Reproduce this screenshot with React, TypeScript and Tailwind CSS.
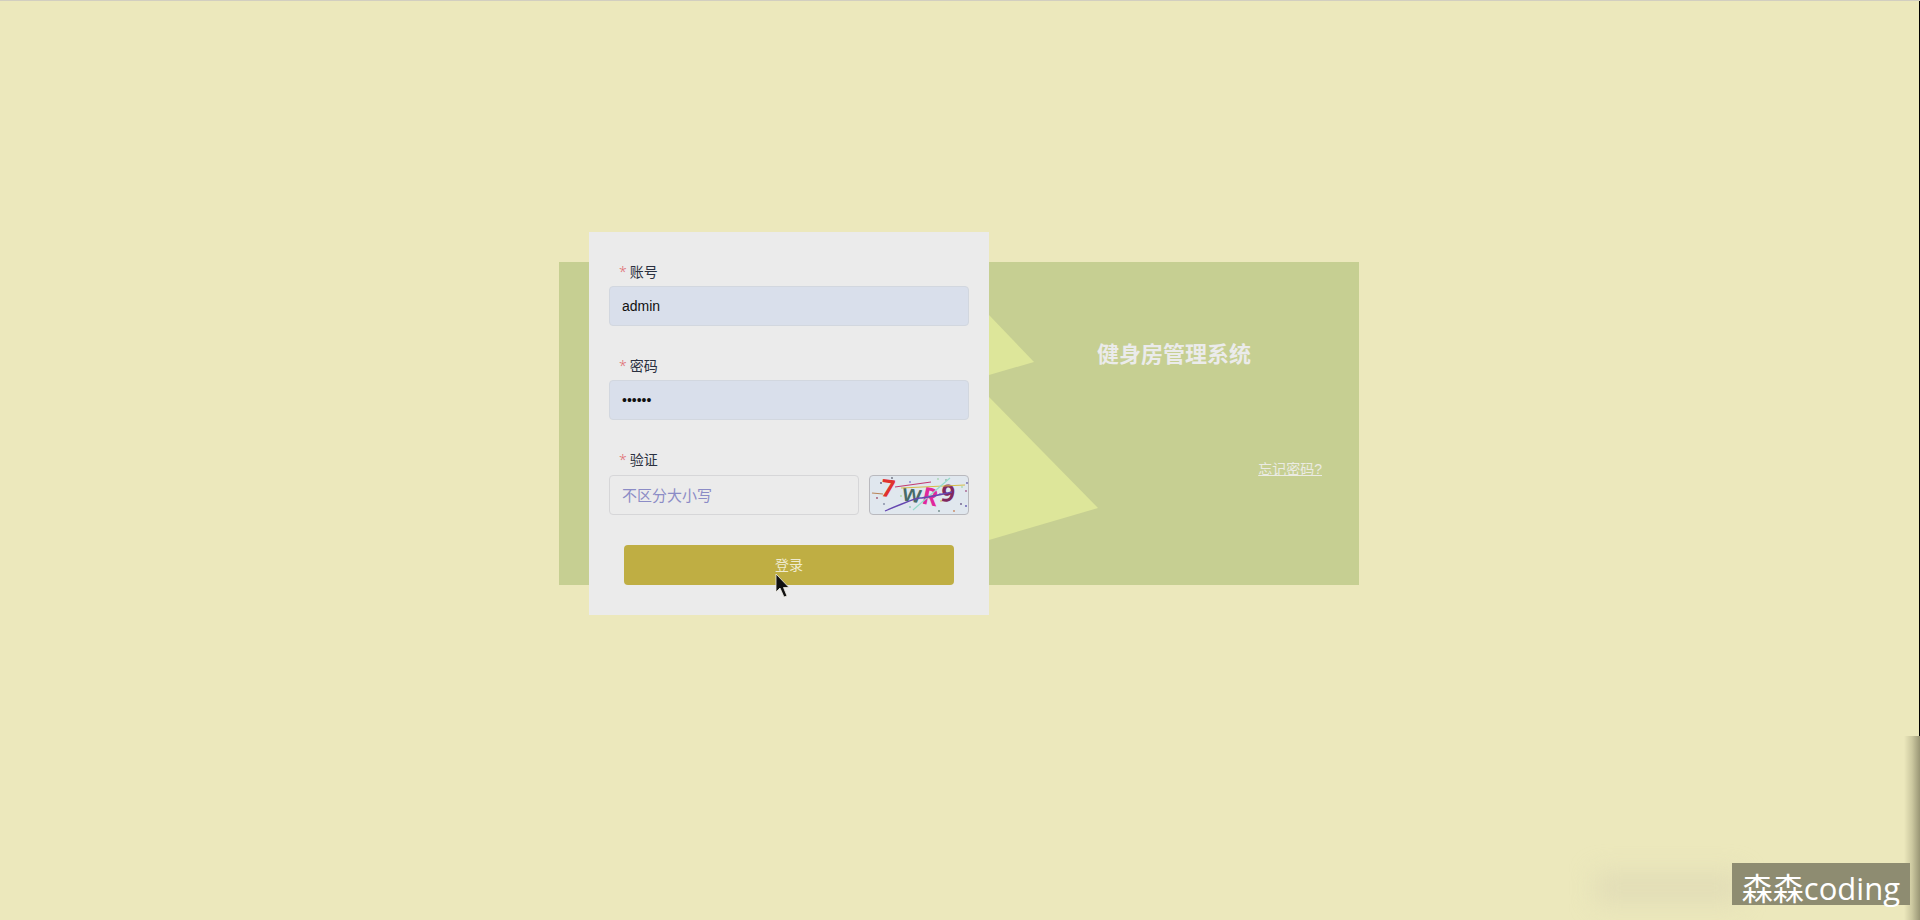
import type { ReactNode } from "react";

const sans = "font-['Liberation_Sans','Noto_Sans_CJK_SC',sans-serif]";

function Field({ id, label, children }: { id: string; label: string; children: ReactNode }) {
  return (
    <div className="flex flex-col">
      <label htmlFor={id} className="flex h-7 items-center gap-[3px] pl-2.5 text-sm text-[#2a3040]">
        <span className="font-['Noto_Sans',sans-serif] font-light text-[#e06a70]">*</span>
        {label}
      </label>
      {children}
    </div>
  );
}

const specks: [number, number, string][] = [
  [11, 7, "#5b5a78"], [22, 2, "#6a6a78"], [40, 6, "#8c7fd0"], [7, 22, "#a0526d"],
  [14, 28, "#7f86a0"], [31, 20, "#a7d8a0"], [40, 31, "#8fc7b4"], [68, 3, "#a8d6b0"],
  [76, 4, "#8fb8a0"], [69, 35, "#6d8a86"], [84, 35, "#c9875f"], [91, 28, "#6b5a86"],
  [96, 15, "#a65e8c"], [96, 30, "#5d52b0"], [97, 7, "#6b62a8"], [70, 18, "#bf7fd0"],
  [71, 25, "#cfd07a"], [92, 11, "#a8dcb0"],
];

function Captcha() {
  return (
    <svg viewBox="0 0 98 38" className="h-full w-full overflow-visible" fontFamily="Open Sans, Noto Sans, sans-serif" fontWeight="700" role="img" aria-label="7WR9">
      {specks.map(([x, y, color]) => (
        <circle key={`${x}-${y}`} cx={x} cy={y} r="0.9" fill={color} />
      ))}
      <path d="M2 17L13 18" stroke="#b98558" strokeWidth="1.2" />
      <text x="11" y="21" fontSize="24" fill="#e0322f" transform="rotate(7 18 14)">7</text>
      <text x="32" y="26" fontSize="24" fontWeight="600" fill="#486b68" transform="rotate(8 42 20)">w</text>
      <text x="52" y="29" fontSize="24" fill="#e0289c" transform="rotate(12 60 22)">R</text>
      <text x="71" y="26" fontSize="24" fill="#80285e" transform="rotate(8 79 19)">9</text>
      <path d="M25 11L61 6" stroke="#c23a70" strokeWidth="1.2" />
      <path d="M31 12L95 9" stroke="#d5bd4b" strokeWidth="1.2" />
      <path d="M43 34L80 2" stroke="#95dccb" strokeWidth="1.2" />
      <path d="M15 35Q45 22 50 22T82 16" stroke="#6547b0" strokeWidth="1.3" fill="none" />
    </svg>
  );
}

export default function App() {
  return (
    <div className={`${sans} relative flex min-h-screen items-center justify-center overflow-hidden border-t border-[#d2cec0] bg-[#ece8bc] pr-0.5 pb-[74px]`}>
      <main className="relative flex w-[800px] items-center justify-between">
        <div aria-hidden="true" className="absolute inset-x-0 inset-y-[30px] bg-[#c6cf92]">
          <svg viewBox="0 0 800 323" className="h-full w-full" fill="#dde69a">
            <path d="M430 53L475 100L430 113Z" />
            <path d="M430 135L539 246L430 278Z" />
          </svg>
        </div>

        <form onSubmit={(e) => e.preventDefault()} className="relative ml-[30px] flex w-[400px] flex-col bg-[#ebebeb] px-5 pt-[26px] pb-[30px]">
          <div className="flex flex-col gap-[26px]">
            <Field id="account" label="账号">
              <input id="account" type="text" defaultValue="admin" autoComplete="off" className="h-10 rounded border border-[#d2d7df] bg-[#d9dfeb] px-3 text-sm text-[#111111] outline-none" />
            </Field>
            <Field id="password" label="密码">
              <input id="password" type="password" defaultValue="123456" autoComplete="off" className="h-10 rounded border border-[#d2d7df] bg-[#d9dfeb] px-3 text-sm text-[#111111] outline-none" />
            </Field>
            <Field id="code" label="验证">
              <div className="flex h-[42px] items-center gap-2.5">
                <input id="code" type="text" placeholder="不区分大小写" className="h-10 min-w-0 flex-1 rounded border border-[#d6d6d8] bg-[#ebebeb] px-3 text-[15px] outline-none placeholder:text-[#8b8cc6]" />
                <button type="button" className="h-10 w-[100px] rounded border border-[#b9b9be] bg-[#e0e7ee]">
                  <Captcha />
                </button>
              </div>
            </Field>
          </div>
          <button type="submit" className="mx-[15px] mt-[29px] h-10 rounded bg-[#bfae43] text-sm text-[#efebcf]">
            登录
          </button>
        </form>

        <section className="relative flex w-[370px] flex-col gap-[88px] pb-[30px]">
          <h1 className="text-center text-[22px] leading-8 font-bold text-[#ebebeb]">健身房管理系统</h1>
          <a href="#forgot" className="mr-[37px] self-end text-sm leading-5 text-[#ebebe3] underline">
            忘记密码?
          </a>
        </section>

        <svg aria-hidden="true" viewBox="0 0 14 26" className="pointer-events-none absolute top-[341px] left-[216px] h-[26px] w-[14px] overflow-visible">
          <path d="M1 1V19L5 15L9 24L12 23L8.5 14.5H14Z" fill="#111111" stroke="#f0eee4" strokeWidth="0.8" />
        </svg>
      </main>

      <div aria-hidden="true" className="absolute top-0 right-0 bottom-[184px] w-px bg-black" />
      <div aria-hidden="true" className="absolute right-0 bottom-0 h-[184px] w-4 bg-linear-to-r from-transparent via-[#85826150] to-[#6e6b50a8]" />
      <div aria-hidden="true" className="absolute right-[180px] bottom-4 h-8 w-[145px] bg-[#dcd7b4a0] blur-[12px]" />
      <div className="absolute right-2.5 bottom-[15px] h-[42px] bg-[#8e8c71] px-2.5 font-['Open_Sans','Noto_Sans_CJK_SC',sans-serif] text-[31px] leading-[50px] text-white">
        森森coding
      </div>
    </div>
  );
}
